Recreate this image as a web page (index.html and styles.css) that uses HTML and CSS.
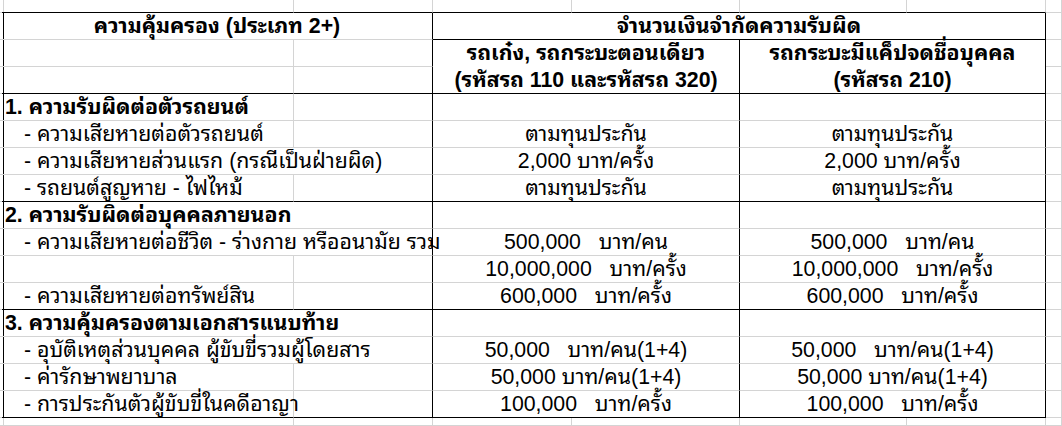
FILE: index.html
```html
<!DOCTYPE html>
<html lang="th">
<head>
<meta charset="utf-8">
<title>ความคุ้มครอง (ประเภท 2+)</title>
<link rel="stylesheet" href="styles.css">
</head>
<body>
<div class="sheet">
  <!-- row 0 (partial) -->
  <div class="c"></div><div class="c bb"></div><div class="c bb"></div><div class="c bb"></div><div class="c bb"></div><div class="c bb"></div><div class="c bb"></div><div class="c"></div>

  <!-- row 1 -->
  <div class="c br"></div>
  <div class="c s2 br b ctr">ความคุ้มครอง (ประเภท 2+)</div>
  <div class="c s4 br bb b ctr">จำนวนเงินจำกัดความรับผิด</div>
  <div class="c"></div>

  <!-- rows 2-3 -->
  <div class="c br"></div>
  <div class="c"></div>
  <div class="c br"></div>
  <div class="c s2 r2 br bb b ctr head2"><div class="l1">รถเก๋ง, รถกระบะตอนเดียว</div><div class="l2">(รหัสรถ 110 และรหัสรถ 320)</div></div>
  <div class="c s2 r2 br bb b ctr head2"><div class="l1">รถกระบะมีแค็ปจดชื่อบุคคล</div><div class="l2">(รหัสรถ 210)</div></div>
  <div class="c"></div>
  <div class="c br"></div>
  <div class="c bb"></div>
  <div class="c br bb"></div>
  <div class="c"></div>

  <!-- row 4 -->
  <div class="c br"></div>
  <div class="c b">1. ความรับผิดต่อตัวรถยนต์</div>
  <div class="c br"></div>
  <div class="c s2 br"></div>
  <div class="c s2 br"></div>
  <div class="c"></div>

  <!-- row 5 -->
  <div class="c br"></div>
  <div class="c sub">- ความเสียหายต่อตัวรถยนต์</div>
  <div class="c br"></div>
  <div class="c s2 br ctr">ตามทุนประกัน</div>
  <div class="c s2 br ctr">ตามทุนประกัน</div>
  <div class="c"></div>

  <!-- row 6 -->
  <div class="c br"></div>
  <div class="c s2 br sub">- ความเสียหายส่วนแรก (กรณีเป็นฝ่ายผิด)</div>
  <div class="c s2 br ctr">2,000 บาท/ครั้ง</div>
  <div class="c s2 br ctr">2,000 บาท/ครั้ง</div>
  <div class="c"></div>

  <!-- row 7 -->
  <div class="c br"></div>
  <div class="c bb sub">- รถยนต์สูญหาย - ไฟไหม้</div>
  <div class="c br bb"></div>
  <div class="c s2 br bb ctr">ตามทุนประกัน</div>
  <div class="c s2 br bb ctr">ตามทุนประกัน</div>
  <div class="c"></div>

  <!-- row 8 -->
  <div class="c br"></div>
  <div class="c s2 br b">2. ความรับผิดต่อบุคคลภายนอก</div>
  <div class="c s2 br"></div>
  <div class="c s2 br"></div>
  <div class="c"></div>

  <!-- row 9 -->
  <div class="c br"></div>
  <div class="c s2 br sub">- ความเสียหายต่อชีวิต - ร่างกาย หรืออนามัย รวม</div>
  <div class="c s2 br ctr">500,000   บาท/คน</div>
  <div class="c s2 br ctr">500,000   บาท/คน</div>
  <div class="c"></div>

  <!-- row 10 -->
  <div class="c br"></div>
  <div class="c"></div>
  <div class="c br"></div>
  <div class="c s2 br ctr">10,000,000   บาท/ครั้ง</div>
  <div class="c s2 br ctr">10,000,000   บาท/ครั้ง</div>
  <div class="c"></div>

  <!-- row 11 -->
  <div class="c br"></div>
  <div class="c bb sub">- ความเสียหายต่อทรัพย์สิน</div>
  <div class="c br bb"></div>
  <div class="c s2 br bb ctr">600,000   บาท/ครั้ง</div>
  <div class="c s2 br bb ctr">600,000   บาท/ครั้ง</div>
  <div class="c"></div>

  <!-- row 12 -->
  <div class="c br"></div>
  <div class="c s2 br b">3. ความคุ้มครองตามเอกสารแนบท้าย</div>
  <div class="c s2 br"></div>
  <div class="c s2 br"></div>
  <div class="c"></div>

  <!-- row 13 -->
  <div class="c br"></div>
  <div class="c s2 br sub">- อุบัติเหตุส่วนบุคคล ผู้ขับขี่รวมผู้โดยสาร</div>
  <div class="c s2 br ctr">50,000   บาท/คน(1+4)</div>
  <div class="c s2 br ctr">50,000   บาท/คน(1+4)</div>
  <div class="c"></div>

  <!-- row 14 -->
  <div class="c br"></div>
  <div class="c sub">- ค่ารักษาพยาบาล</div>
  <div class="c br"></div>
  <div class="c s2 br ctr">50,000 บาท/คน(1+4)</div>
  <div class="c s2 br ctr">50,000 บาท/คน(1+4)</div>
  <div class="c"></div>

  <!-- row 15 -->
  <div class="c br"></div>
  <div class="c bb sub">- การประกันตัวผู้ขับขี่ในคดีอาญา</div>
  <div class="c br bb"></div>
  <div class="c s2 br bb ctr">100,000   บาท/ครั้ง</div>
  <div class="c s2 br bb ctr">100,000   บาท/ครั้ง</div>
  <div class="c"></div>

  <!-- row 16 (partial) -->
  <div class="c"></div><div class="c"></div><div class="c"></div><div class="c"></div><div class="c"></div><div class="c"></div><div class="c"></div><div class="c"></div>
</div>
</body>
</html>
```

FILE: styles.css
```css
html, body {
  margin: 0;
  padding: 0;
  background: #ffffff;
}

body {
  width: 1062px;
  height: 426px;
  overflow: hidden;
  font-family: "Liberation Sans", "Tahoma", "Noto Sans Thai Looped", "Noto Sans Thai", "Loma", "Garuda", "DejaVu Sans", sans-serif;
  font-size: 21.3px;
  color: #000000;
}

.sheet {
  display: grid;
  grid-template-columns: 2px 292px 139px 139px 168px 167px 139px 1fr;
  grid-template-rows: 13px repeat(15, 27px) 1fr;
  width: 1062px;
  height: 426px;
}

.c {
  box-sizing: border-box;
  border-right: 1px solid #d4d4d4;
  border-bottom: 1px solid #d4d4d4;
  line-height: 26px;
  white-space: pre;
  padding-left: 3px;
  overflow: visible;
  min-width: 0;
}

.br { border-right-color: #000000; }
.bb { border-bottom-color: #000000; }

.s2 { grid-column: span 2; }
.s4 { grid-column: span 4; }
.r2 { grid-row: span 2; }

.b { font-weight: bold; }
.ctr { text-align: center; padding-left: 0; }
.sub { padding-left: 22px; }

.head2 .l1 { line-height: 27px; }
.head2 .l2 { line-height: 26px; }
```
